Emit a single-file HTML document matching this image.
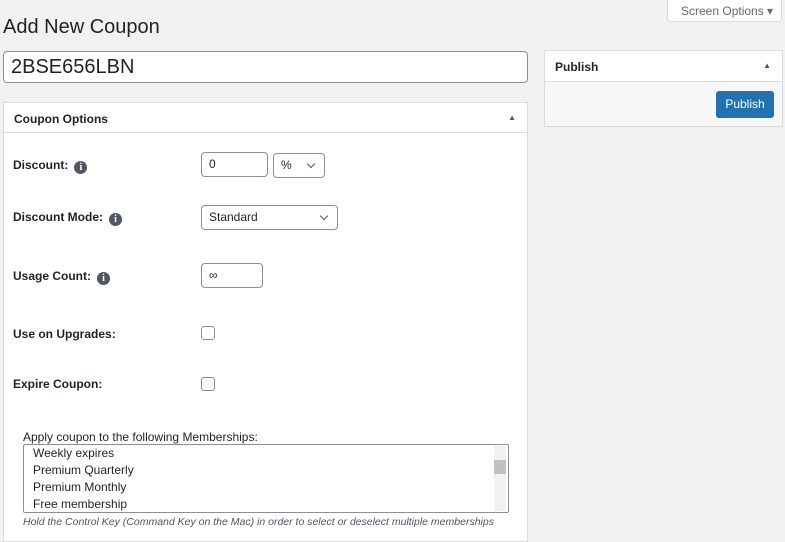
<!DOCTYPE html><html><head><style>
*{box-sizing:border-box;margin:0;padding:0}
body{width:785px;height:532px;overflow:hidden;background:#f1f1f1;font-family:"Liberation Sans",sans-serif;color:#1d2327;position:relative;font-size:13px}
.abs{position:absolute}
.sel::after{content:"";position:absolute;right:10px;top:7px;width:5px;height:5px;border-right:1.5px solid #50575e;border-bottom:1.5px solid #50575e;transform:rotate(45deg)}
.inp{position:absolute;background:#fff;border:1px solid #8c8f94;border-radius:4px;font-size:12px;padding-left:7px;line-height:23px}
.lbl{position:absolute;left:13px;font-weight:bold;font-size:12px;color:#1d2327}
.info{display:inline-block;width:13px;height:13px;border-radius:50%;background:#50575e;color:#fff;font-size:10px;text-align:center;line-height:13px;font-weight:bold;font-family:"Liberation Serif",serif;margin-left:6px;vertical-align:-1px}
.cb{position:absolute;left:201px;width:14px;height:14px;border:1px solid #8c8f94;border-radius:3px;background:#fff}
</style></head><body>
<div class="abs" style="left:3px;top:16px;font-size:20px;color:#1d2327">Add New Coupon</div>
<div class="abs" style="left:667px;top:0;width:115px;height:22px;background:#fff;border:1px solid #dcdcde;border-top:none;border-radius:0 0 4px 4px;font-size:12px;color:#646970;padding:4px 0 0 13px">Screen Options ▾</div>
<div class="abs" style="left:3px;top:51px;width:525px;height:32px;background:#fff;border:1px solid #8c8f94;border-radius:4px;font-size:20px;padding:4px 0 0 7px">2BSE656LBN</div>
<div class="abs" style="left:544px;top:50px;width:239px;height:77px;background:#f6f7f7;border:1px solid #dcdcde">
<div style="height:31px;background:#fff;border-bottom:1px solid #dcdcde;font-weight:bold;font-size:12px;padding:9px 0 0 10px">Publish<span style="position:absolute;right:11px;top:10px;font-size:8px;color:#50575e">▲</span></div>
<div style="position:absolute;left:171px;top:40px;width:58px;height:27px;background:#2271b1;border-radius:3px;color:#fff;font-size:12px;text-align:center;line-height:27px">Publish</div>
</div>
<div class="abs" style="left:3px;top:102px;width:525px;height:440px;background:#fff;border:1px solid #dcdcde">
<div style="height:30px;border-bottom:1px solid #dcdcde;font-weight:bold;font-size:12px;padding:9px 0 0 10px">Coupon Options<span style="position:absolute;right:11px;top:10px;font-size:8px;color:#50575e">▲</span></div>
</div>
<div class="lbl" style="top:158px">Discount:<span class="info">i</span></div>
<div class="inp" style="left:201px;top:152px;width:67px;height:25px">0</div>
<div class="inp sel" style="left:273px;top:153px;width:52px;height:25px">%</div>
<div class="lbl" style="top:210px">Discount Mode:<span class="info">i</span></div>
<div class="inp sel" style="left:201px;top:205px;width:137px;height:25px">Standard</div>
<div class="lbl" style="top:269px">Usage Count:<span class="info">i</span></div>
<div class="inp" style="left:201px;top:263px;width:62px;height:25px">∞</div>
<div class="lbl" style="top:327px">Use on Upgrades:</div>
<div class="cb" style="top:326px"></div>
<div class="lbl" style="top:377px">Expire Coupon:</div>
<div class="cb" style="top:377px"></div>
<div class="abs" style="left:23px;top:430px;font-size:12px;color:#1d2327">Apply coupon to the following Memberships:</div>
<div class="abs" style="left:23px;top:444px;width:486px;height:69px;border:1px solid #8c8f94;border-radius:2px;background:#fff;font-size:12px;line-height:17px;padding:0 0 0 9px">Weekly expires<br>Premium Quarterly<br>Premium Monthly<br>Free membership
<div style="position:absolute;right:2px;top:1px;width:12px;height:65px;background:#f1f1f1"><div style="margin-top:14px;height:14px;background:#c1c1c1"></div></div></div>
<div class="abs" style="left:23px;top:516px;font-size:10.5px;font-style:italic;color:#50575e">Hold the Control Key (Command Key on the Mac) in order to select or deselect multiple memberships</div>
</body></html>
